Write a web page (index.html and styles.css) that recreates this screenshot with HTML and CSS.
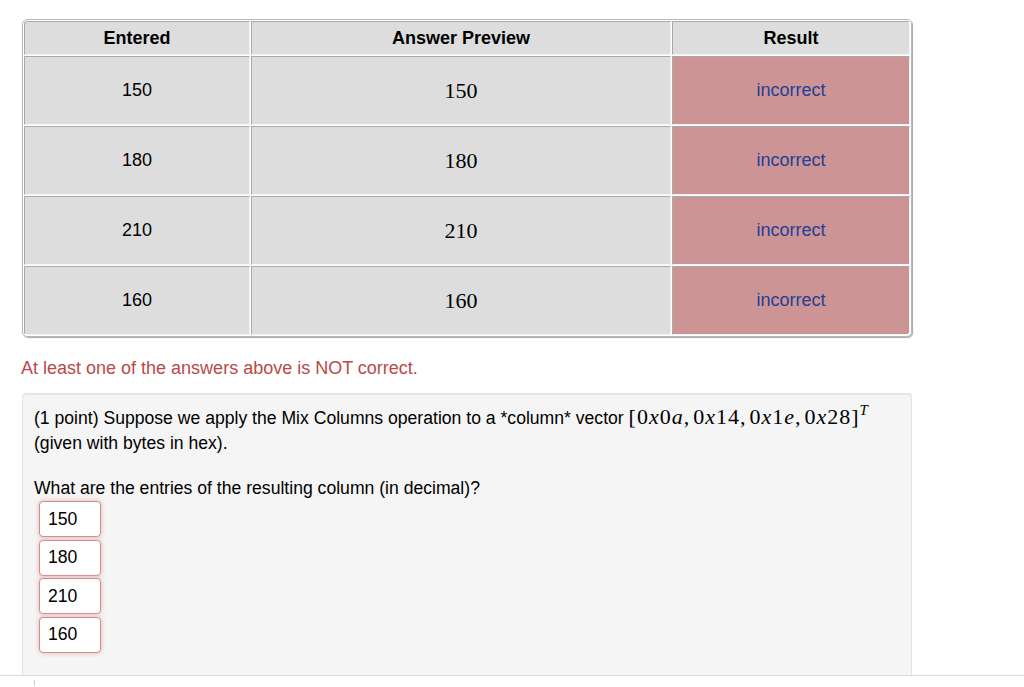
FILE: index.html
```html
<!DOCTYPE html>
<html>
<head>
<meta charset="utf-8">
<link rel="stylesheet" href="styles.css">
</head>
<body>
<div class="page">
  <table class="results">
    <thead>
      <tr>
        <th class="c1">Entered</th>
        <th class="c2">Answer Preview</th>
        <th class="c3">Result</th>
      </tr>
    </thead>
    <tbody>
      <tr><td>150</td><td class="preview">150</td><td class="bad">incorrect</td></tr>
      <tr><td>180</td><td class="preview">180</td><td class="bad">incorrect</td></tr>
      <tr><td>210</td><td class="preview">210</td><td class="bad">incorrect</td></tr>
      <tr><td>160</td><td class="preview">160</td><td class="bad">incorrect</td></tr>
    </tbody>
  </table>

  <div class="message">At least one of the answers above is NOT correct.</div>

  <div class="problem">
    <p class="text">(1 point) Suppose we apply the Mix Columns operation to a *column* vector <span class="math">[0<i>x</i>0<i>a</i><span class="comma">,</span>0<i>x</i>14<span class="comma">,</span>0<i>x</i>1<i>e</i><span class="comma">,</span>0<i>x</i>28]<sup><i>T</i></sup></span><br>(given with bytes in hex).</p>
    <p class="text q">What are the entries of the resulting column (in decimal)?</p>
    <div class="inputs">
      <input class="ans" type="text" value="150">
      <input class="ans" type="text" value="180">
      <input class="ans" type="text" value="210">
      <input class="ans" type="text" value="160">
    </div>
  </div>
</div>
<div class="footer"><div class="tick"></div></div>
</body>
</html>
```

FILE: styles.css
```css
html, body {
  margin: 0;
  padding: 0;
  background: #ffffff;
  font-family: "Liberation Sans", Arial, sans-serif;
  color: #000;
}

.page {
  padding: 19px 0 0 22px;
  width: 890px;
}

.results {
  width: 890px;
  border-collapse: separate;
  border-spacing: 1px;
  border: 1px solid #b8b8b8;
  border-radius: 5px;
  box-shadow: 1px 1px 1px #a8a8a8;
  table-layout: fixed;
  font-size: 18px;
}

.results th,
.results td {
  background: #dddddd;
  text-align: center;
  vertical-align: middle;
  border-top: 1px solid #a9a9a9;
  border-left: 1px solid #a9a9a9;
  border-right: 1px solid #f4f4f4;
  border-bottom: 1px solid #f4f4f4;
  padding: 0;
}

.results th {
  height: 32px;
  font-weight: bold;
  font-size: 18px;
}

.results td {
  height: 67px;
}

.results th:first-child { border-top-left-radius: 3px; }
.results th:last-child { border-top-right-radius: 3px; }
.results tr:last-child td:last-child { border-bottom-right-radius: 3px; }
.results tr:last-child td:first-child { border-bottom-left-radius: 3px; }

.c1 { width: 224px; }
.c2 { width: 418px; }
.c3 { width: 236px; }

.results td.preview {
  font-family: "Liberation Serif", "Times New Roman", serif;
  font-size: 22px;
}

.results td.bad {
  background: #cc9494;
  color: #233f98;
}

.message {
  margin: 21px 0 0 -1px;
  line-height: 20px;
  font-size: 18px;
  color: #b94a48;
}

.problem {
  margin-top: 15px;
  background: #f5f5f5;
  border: 1px solid #e3e3e3;
  border-bottom: none;
  border-radius: 4px 4px 0 0;
  padding: 12px 11px 22px 11px;
  box-shadow: inset 0 1px 1px rgba(0,0,0,0.05);
}

.text {
  margin: 0;
  font-size: 17.6px;
  line-height: 25px;
}

.text.q {
  margin-top: 20px;
}

.math {
  font-family: "Liberation Serif", "Times New Roman", serif;
  font-size: 22px;
  letter-spacing: 1px;
  line-height: 0;
}

.math i {
  font-style: italic;
}

.math .comma {
  margin-right: 3px;
}

.math sup {
  font-size: 15px;
  line-height: 0;
  vertical-align: 9px;
}

.inputs {
  display: flex;
  flex-direction: column;
  gap: 2.5px;
  margin: 0 0 0 5px;
}

.ans {
  width: 62px;
  height: 36px;
  box-sizing: border-box;
  border: 1px solid #d48d8c;
  border-radius: 4px;
  box-shadow: 0 0 5px #e6b3b2;
  background: #fff;
  font-family: "Liberation Sans", Arial, sans-serif;
  font-size: 17.6px;
  padding: 0 8px;
  color: #000;
  outline: none;
}

.footer {
  border-top: 1px solid #dcdcdc;
  height: 10px;
  padding-left: 34px;
}

.tick {
  margin-top: 4px;
  width: 0;
  height: 7px;
  border-left: 1px solid #d0d0d0;
}
```
